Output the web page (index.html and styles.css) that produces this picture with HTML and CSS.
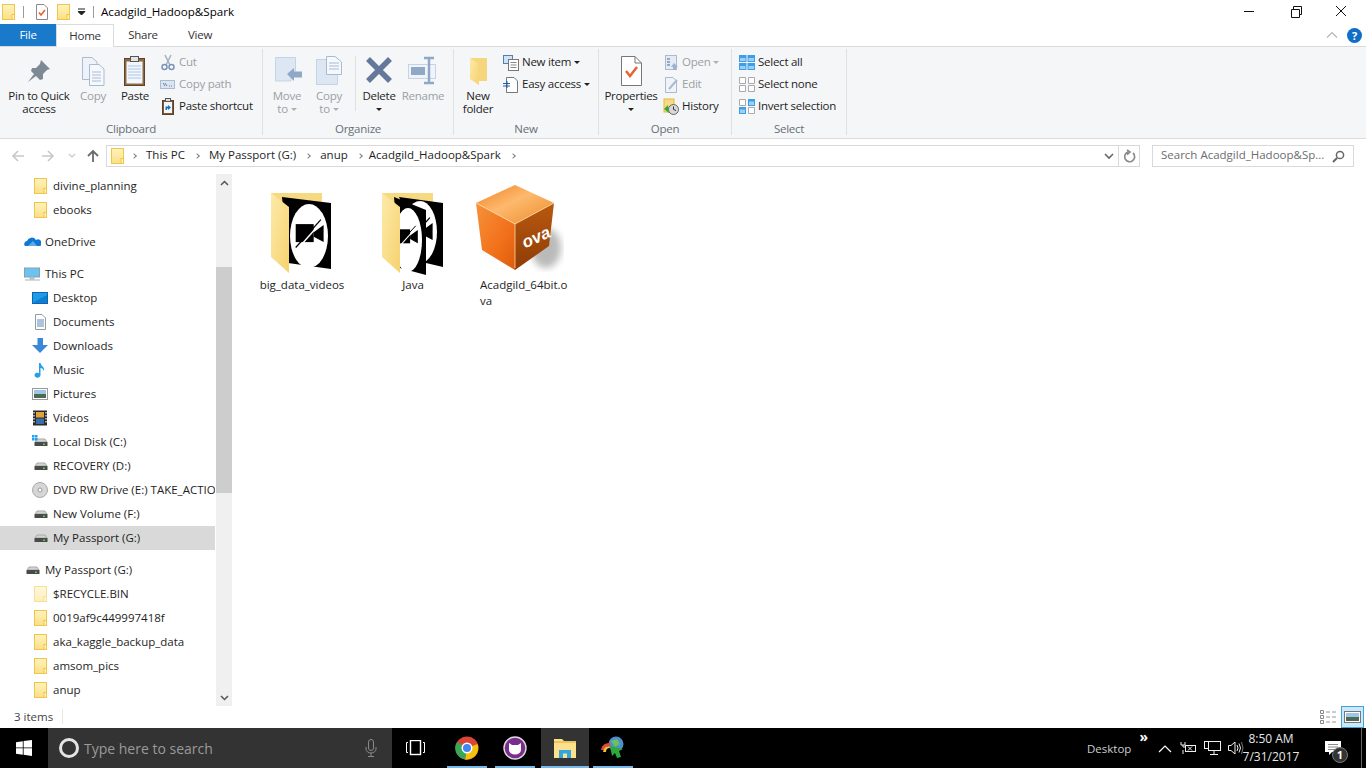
FILE: index.html
```html
<!doctype html>
<html lang="en">
  <head>
    <meta charset="UTF-8" />
    <title>Acadgild_Hadoop&amp;Spark</title>
    <link rel="stylesheet" href="styles.css">
  </head>
  <body>
    <!-- shared icons -->
    <svg class="defs" aria-hidden="true">
      <defs>
        <linearGradient id="fold" x1="0" y1="0" x2="0" y2="1">
          <stop offset="0" stop-color="#fff3bd" />
          <stop offset="1" stop-color="#fbdf85" />
        </linearGradient>
        <linearGradient id="flap" x1="0" y1="0" x2="1" y2="1">
          <stop offset="0" stop-color="#fdeaa8" />
          <stop offset="1" stop-color="#f6d270" />
        </linearGradient>
        <linearGradient id="ova-top" x1="0" y1="0" x2="1" y2="1">
          <stop offset="0" stop-color="#f08020" />
          <stop offset="0.45" stop-color="#fdb96e" />
          <stop offset="1" stop-color="#ec8a28" />
        </linearGradient>
        <linearGradient id="ova-left" x1="0" y1="0" x2="1" y2="1">
          <stop offset="0" stop-color="#f6923a" />
          <stop offset="0.6" stop-color="#f2711a" />
          <stop offset="1" stop-color="#dc5c0c" />
        </linearGradient>
        <linearGradient id="ova-right" x1="0" y1="0" x2="0" y2="1">
          <stop offset="0" stop-color="#b9590f" />
          <stop offset="1" stop-color="#8e3c07" />
        </linearGradient>
        <filter id="soft"><feGaussianBlur stdDeviation="3.5" /></filter>
        <symbol id="folder" viewBox="0 0 17 18">
          <rect x="2.5" y="1.5" width="12" height="15" fill="url(#fold)" stroke="#f0c64a" />
          <rect x="12" y="11.5" width="2.5" height="5" fill="#fff3bd" stroke="#f0c64a" />
        </symbol>
        <symbol id="drive" viewBox="0 0 17 18">
          <path d="M3 9 L5 6 H13 L15 9 Z" fill="#d4d4d4" stroke="#a8a8a8" />
          <rect x="2.5" y="9" width="13" height="4" fill="#4a4a4a" />
          <rect x="11" y="10.5" width="2" height="1.5" fill="#4fd04f" />
        </symbol>
        <symbol id="camera" viewBox="0 0 40 40">
          <rect x="3" y="9" width="20" height="20" fill="#000" />
          <path d="M23 18 L34 10 V29 L23 23 Z" fill="#000" />
          <path d="M3 35 L31 4" stroke="#000" stroke-width="1.4" />
          <path d="M5.5 36 L33 5" stroke="#fff" stroke-width="1.6" />
        </symbol>
      </defs>
    </svg>

    <div class="window">
      <div class="titlebar">
        <svg class="qa-folder" width="17" height="18"><use href="#folder" /></svg>
        <i class="qa-sep"></i>
        <svg class="qa-check" width="14" height="18" viewBox="0 0 14 18">
          <path d="M1.5 1.5 H9 L12.5 5 V16.5 H1.5 Z" fill="#fff" stroke="#8a8a8a" />
          <path d="M4 9.5 L6 12 L10 7" fill="none" stroke="#e8622a" stroke-width="1.6" />
        </svg>
        <svg class="qa-folder2" width="17" height="18"><use href="#folder" /></svg>
        <svg class="qa-more" width="8" height="8" viewBox="0 0 8 8">
          <path d="M0 1 H7 M0 3.5 H7 L3.5 7 Z" stroke="#222" fill="#222" />
        </svg>
        <i class="qa-sep qa-sep-2"></i>
        <span class="title-text">Acadgild_Hadoop&amp;Spark</span>
        <div class="win-controls">
          <svg width="46" height="22" viewBox="0 0 46 22"><path d="M18 10.5 H28" stroke="#111" /></svg>
          <svg width="46" height="22" viewBox="0 0 46 22">
            <path d="M19.5 8.5 H27.5 V16.5 H19.5 Z M21.5 8 V5.5 H29.5 V13.5 H28" fill="none" stroke="#111" />
          </svg>
          <svg width="46" height="22" viewBox="0 0 46 22"><path d="M18 5 L28 15 M28 5 L18 15" stroke="#111" /></svg>
        </div>
      </div>

      <div class="tabs">
        <div class="tab tab-file">File</div>
        <div class="tab tab-home">Home</div>
        <div class="tab tab-share">Share</div>
        <div class="tab tab-view">View</div>
        <div class="tabs-right">
          <svg width="12" height="8" viewBox="0 0 12 8"><path d="M1 6.5 L6 1.5 L11 6.5" fill="none" stroke="#b5b5b5" stroke-width="1.2" /></svg>
          <span class="help">?</span>
        </div>
      </div>

      <div class="ribbon">
        <section class="group group-clipboard">
          <div class="group-body">
            <div class="big btn-pin">
              <svg width="30" height="32" viewBox="0 0 30 30">
                <path d="M17 4 L26 13 L23 14 L19 18 L19 23 L16 24 L7 15 L8 12 L12 12 L16 8 Z M10 18 L4 26 L12 20 Z" fill="#7d8994" />
              </svg>
              <span>Pin to Quick<br>access</span>
            </div>
            <div class="big off btn-copy">
              <svg width="30" height="32" viewBox="0 0 30 32">
                <path d="M4.5 2.5 H14 L19 7 V24.5 H4.5 Z" fill="#eef3fa" stroke="#a9bad2" />
                <path d="M11.5 9.5 H21 L26 14 V30.5 H11.5 Z" fill="#f5f8fc" stroke="#a9bad2" />
                <path d="M14 17 H23 M14 20 H23 M14 23 H23 M14 26 H23" stroke="#a9bad2" />
              </svg>
              <span>Copy</span>
            </div>
            <div class="big btn-paste">
              <svg width="26" height="32" viewBox="0 0 26 32">
                <rect x="2.5" y="3.5" width="20" height="27" fill="#8a6a45" stroke="#5d4226" />
                <rect x="4.5" y="6.5" width="16" height="22" fill="#f3f7fc" />
                <path d="M6 11 H19 M6 14 H19 M6 17 H19 M6 20 H19 M6 23 H19" stroke="#a9c8e8" />
                <rect x="8.5" y="1.5" width="8" height="5" fill="#e5e5e5" stroke="#555" />
              </svg>
              <span>Paste</span>
            </div>
            <div class="small-col col-clipboard">
              <div class="small off">
                <svg width="16" height="17" viewBox="0 0 16 17">
                  <path d="M5 1 L10 11 M11 1 L6 11" stroke="#a6b0bb" stroke-width="1.5" />
                  <circle cx="4.5" cy="13" r="2.5" fill="none" stroke="#7d93b5" stroke-width="1.5" />
                  <circle cx="11.5" cy="13" r="2.5" fill="none" stroke="#7d93b5" stroke-width="1.5" />
                </svg>
                <span>Cut</span>
              </div>
              <div class="small off">
                <svg width="16" height="17" viewBox="0 0 16 17">
                  <rect x="0.5" y="4.5" width="14" height="8" fill="#dbe5f2" stroke="#a9bad2" />
                  <path d="M3 7 L5 10 M5 7 L7 10 M9 10 H10 M11 10 H12" stroke="#6f86a8" />
                </svg>
                <span>Copy path</span>
              </div>
              <div class="small">
                <svg width="16" height="17" viewBox="0 0 16 17">
                  <rect x="2.5" y="2.5" width="11" height="14" fill="#7a5a38" stroke="#5d4226" />
                  <rect x="4" y="4" width="8" height="11" fill="#f3f7fc" />
                  <rect x="5.5" y="0.5" width="5" height="3" fill="#ddd" stroke="#555" />
                  <path d="M5.5 12 V8.5 H8 V7 L11 9.5 L8 12 V10.5 H7 V12 Z" fill="#1a6fc0" />
                </svg>
                <span>Paste shortcut</span>
              </div>
            </div>
          </div>
          <div class="group-label">Clipboard</div>
        </section>

        <section class="group group-organize">
          <div class="group-body">
            <div class="big off btn-move">
              <svg width="30" height="32" viewBox="0 0 30 32">
                <path d="M3.5 2.5 H23.5 V16 H19 V26 H3.5 Z" fill="#dde7f3" stroke="#c5d3e6" />
                <path d="M15 19 L22 13 V16.5 H30 V22.5 H22 V26 Z" fill="#8fa8c8" />
              </svg>
              <span>Move<br>to <b class="caret off-caret"></b></span>
            </div>
            <div class="big off btn-copyto">
              <svg width="30" height="32" viewBox="0 0 30 32">
                <path d="M2.5 4.5 H23.5 V29.5 H2.5 Z" fill="#dde7f3" stroke="#c5d3e6" />
                <path d="M12.5 1.5 H21 L27.5 7 V19.5 H12.5 Z" fill="#f5f8fc" stroke="#a9bad2" />
                <path d="M15 8 H25 M15 11 H25 M15 14 H25" stroke="#a9bad2" />
              </svg>
              <span>Copy<br>to <b class="caret off-caret"></b></span>
            </div>
            <i class="ribbon-sep"></i>
            <div class="big btn-delete">
              <svg width="30" height="32" viewBox="0 0 30 32">
                <path d="M4 4 L26 26 M26 4 L4 26" stroke="#64789c" stroke-width="5.5" />
              </svg>
              <span>Delete<br><b class="caret"></b></span>
            </div>
            <div class="big off btn-rename">
              <svg width="32" height="32" viewBox="0 0 32 32">
                <rect x="1.5" y="9.5" width="27" height="14" fill="#f0f4f9" stroke="#c5d3e6" />
                <rect x="4" y="12" width="14" height="8" fill="#8fa8c8" />
                <path d="M17 3 H27 M22 3 V28 M17 28 H27" stroke="#8fa8c8" stroke-width="2.5" fill="none" />
              </svg>
              <span>Rename</span>
            </div>
          </div>
          <div class="group-label">Organize</div>
        </section>

        <section class="group group-new">
          <div class="group-body">
            <div class="big btn-newfolder">
              <svg width="26" height="32" viewBox="0 0 26 32">
                <path d="M5 3 H22 V26 H10 Z" fill="#f5d67c" />
                <path d="M5 3 L13 8 L14 30 L5 24 Z" fill="url(#flap)" />
              </svg>
              <span>New<br>folder</span>
            </div>
            <div class="small-col col-new">
              <div class="small">
                <svg width="16" height="17" viewBox="0 0 16 17">
                  <rect x="0.5" y="1.5" width="9" height="8" fill="#cfe3f7" stroke="#5a7fa6" />
                  <rect x="5.5" y="5.5" width="10" height="11" fill="#fff" stroke="#777" />
                  <path d="M7.5 8.5 H13.5 M7.5 11 H13.5 M7.5 13.5 H13.5" stroke="#888" />
                </svg>
                <span>New item <b class="caret"></b></span>
              </div>
              <div class="small">
                <svg width="16" height="17" viewBox="0 0 16 17">
                  <path d="M3.5 1.5 H11 L14.5 5 V16.5 H3.5 Z" fill="#fff" stroke="#777" />
                  <path d="M0 7.5 H7 M0 10 H7 M4 5 V12" stroke="#1f5fa8" />
                </svg>
                <span>Easy access <b class="caret"></b></span>
              </div>
            </div>
          </div>
          <div class="group-label">New</div>
        </section>

        <section class="group group-open">
          <div class="group-body">
            <div class="big btn-props">
              <svg width="26" height="32" viewBox="0 0 26 32">
                <path d="M3.5 1.5 H17 L23.5 8 V30.5 H3.5 Z" fill="#fff" stroke="#777" />
                <path d="M17 1.5 V8 H23.5" fill="none" stroke="#777" />
                <path d="M8 16 L12 21 L19 12" fill="none" stroke="#e8622a" stroke-width="2.4" />
              </svg>
              <span>Properties<br><b class="caret"></b></span>
            </div>
            <div class="small-col col-open">
              <div class="small off">
                <svg width="16" height="17" viewBox="0 0 16 17">
                  <rect x="2.5" y="1.5" width="11" height="14" fill="#e4ebf4" stroke="#a9bad2" />
                  <path d="M4 5 H7 M4 8 H7 M4 11 H7" stroke="#7d93b5" stroke-width="1.5" />
                  <path d="M8 13 L11 9 L15 13 H13 V16 H10 V13 Z" fill="#9fb3cc" />
                </svg>
                <span>Open <b class="caret off-caret"></b></span>
              </div>
              <div class="small off">
                <svg width="16" height="17" viewBox="0 0 16 17">
                  <path d="M2.5 1.5 H10 L13.5 5 V16.5 H2.5 Z" fill="#f0f4f9" stroke="#a9bad2" />
                  <path d="M6 13 L14 4" stroke="#a9bad2" stroke-width="2" />
                </svg>
                <span>Edit</span>
              </div>
              <div class="small">
                <svg width="16" height="17" viewBox="0 0 16 17">
                  <rect x="1" y="1" width="10" height="13" fill="#f8dc85" stroke="#e0b93f" />
                  <circle cx="10.5" cy="11.5" r="5" fill="#d8d8d8" stroke="#666" />
                  <path d="M10.5 8.5 V11.5 L13 12.5" fill="none" stroke="#333" />
                  <path d="M1 11 L5 7 L6 15 Z" fill="#3aa53a" />
                </svg>
                <span>History</span>
              </div>
            </div>
          </div>
          <div class="group-label">Open</div>
        </section>

        <section class="group group-select">
          <div class="group-body">
            <div class="small-col">
              <div class="small">
                <svg width="16" height="17" viewBox="0 0 16 17">
                  <path d="M0 1 H7.5 V8 H0 Z M8.5 1 H16 V8 H8.5 Z M0 9 H7.5 V16 H0 Z M8.5 9 H16 V16 H8.5 Z" fill="#3f9ee8" />
                  <path d="M1 4 H6.5 V7 H1 Z M9.5 4 H15 V7 H9.5 Z M1 12 H6.5 V15 H1 Z M9.5 12 H15 V15 H9.5 Z" fill="#9ccff5" />
                </svg>
                <span>Select all</span>
              </div>
              <div class="small">
                <svg width="16" height="17" viewBox="0 0 16 17">
                  <path d="M.5 1.5 H6.5 V7.5 H.5 Z M9.5 1.5 H15.5 V7.5 H9.5 Z M.5 9.5 H6.5 V15.5 H.5 Z M9.5 9.5 H15.5 V15.5 H9.5 Z" fill="#fff" stroke="#aaa" />
                </svg>
                <span>Select none</span>
              </div>
              <div class="small">
                <svg width="16" height="17" viewBox="0 0 16 17">
                  <path d="M.5 1.5 H6.5 V7.5 H.5 Z M9.5 9.5 H15.5 V15.5 H9.5 Z" fill="#fff" stroke="#aaa" />
                  <path d="M9 1 H16 V8 H9 Z M0 9 H7 V16 H0 Z" fill="#3f9ee8" />
                  <path d="M10 3.5 H15 V7 H10 Z M1 11.5 H6 V15 H1 Z" fill="#9ccff5" />
                </svg>
                <span>Invert selection</span>
              </div>
            </div>
          </div>
          <div class="group-label">Select</div>
        </section>
      </div>

      <div class="address-row">
        <div class="nav-btns">
          <svg width="16" height="14" viewBox="0 0 16 14"><path d="M14 7 H3 M8 2 L3 7 L8 12" fill="none" stroke="#c8c8c8" stroke-width="1.6" /></svg>
          <svg width="16" height="14" viewBox="0 0 16 14"><path d="M2 7 H13 M8 2 L13 7 L8 12" fill="none" stroke="#c8c8c8" stroke-width="1.6" /></svg>
          <svg width="8" height="6" viewBox="0 0 8 6"><path d="M1 1 L4 4 L7 1" fill="none" stroke="#c8c8c8" stroke-width="1.2" /></svg>
          <svg width="16" height="14" viewBox="0 0 16 14"><path d="M8 13 V2 M3 7 L8 2 L13 7" fill="none" stroke="#6a6a6a" stroke-width="1.8" /></svg>
        </div>
        <div class="crumbs">
          <svg class="crumb-folder" width="17" height="18"><use href="#folder" /></svg>
          <span class="chev"></span><span class="crumb crumb-pc">This PC</span>
          <span class="chev"></span><span class="crumb crumb-drive">My Passport (G:)</span>
          <span class="chev"></span><span class="crumb crumb-anup">anup</span>
          <span class="chev"></span><span class="crumb crumb-last">Acadgild_Hadoop&amp;Spark</span>
          <span class="chev"></span>
          <svg class="crumb-down" width="10" height="7" viewBox="0 0 10 7"><path d="M1 1 L5 5 L9 1" fill="none" stroke="#666" stroke-width="1.6" /></svg>
          <span class="crumb-refresh">
            <svg width="13" height="14" viewBox="0 0 13 14">
              <path d="M10 4 A5 5 0 1 1 5 3 M4 1 L7 3 L4 5.5" fill="none" stroke="#8a8a8a" stroke-width="1.7" />
            </svg>
          </span>
        </div>
        <div class="search-box">
          <span>Search Acadgild_Hadoop&amp;Sp...</span>
          <svg width="13" height="13" viewBox="0 0 13 13">
            <circle cx="8" cy="5" r="3.6" fill="none" stroke="#666" stroke-width="1.5" />
            <path d="M5 8 L1 12" stroke="#666" stroke-width="2" />
          </svg>
        </div>
      </div>

      <div class="main">
        <nav class="tree">
          <div class="row lvl2"><svg width="17" height="18"><use href="#folder" /></svg><span>divine_planning</span></div>
          <div class="row lvl2"><svg width="17" height="18"><use href="#folder" /></svg><span>ebooks</span></div>
          <div class="row lvl1 head">
            <svg width="17" height="18" viewBox="0 0 17 18">
              <path d="M1 13 A3 3 0 0 1 3 8 A5 5 0 0 1 12 7 A3.5 3.5 0 0 1 16 13 Z" fill="#0f78d4" />
              <path d="M4 13 L9 8 L13 13 Z" fill="#fff" opacity="0.35" />
            </svg>
            <span>OneDrive</span>
          </div>
          <div class="row lvl1 head">
            <svg width="17" height="18" viewBox="0 0 17 18">
              <rect x="0.5" y="3" width="15" height="9" fill="#6cc3f2" stroke="#8aa0b0" />
              <path d="M6 12 H10 V14 H6 Z M1 15 H16" stroke="#a4b2bd" fill="#cfd8de" />
            </svg>
            <span>This PC</span>
          </div>
          <div class="row lvl2">
            <svg width="17" height="18" viewBox="0 0 17 18">
              <rect x="0.5" y="3.5" width="15" height="11" fill="#1d9ae8" stroke="#0d66ad" />
              <path d="M2 13 L15 6 V14 H2 Z" fill="#0e7fd0" />
            </svg>
            <span>Desktop</span>
          </div>
          <div class="row lvl2">
            <svg width="17" height="18" viewBox="0 0 17 18">
              <path d="M3.5 1.5 H10 L13.5 5 V16.5 H3.5 Z" fill="#fff" stroke="#9a9a9a" />
              <path d="M5 7 H12 M5 9 H12 M5 11 H12 M5 13 H12" stroke="#5b8ab8" />
            </svg>
            <span>Documents</span>
          </div>
          <div class="row lvl2">
            <svg width="17" height="18" viewBox="0 0 17 18">
              <path d="M5.5 1 H11 V8 H16 L8 16 L0 8 H5.5 Z" fill="#3b87d8" />
            </svg>
            <span>Downloads</span>
          </div>
          <div class="row lvl2">
            <svg width="17" height="18" viewBox="0 0 17 18">
              <path d="M7 2 L8.5 2 C9 5 13 6 12 10 C11 8 10 7 8.5 7 V14 A3 2.5 0 1 1 7 12 Z" fill="#27a0e8" />
            </svg>
            <span>Music</span>
          </div>
          <div class="row lvl2">
            <svg width="17" height="18" viewBox="0 0 17 18">
              <rect x="0.5" y="3.5" width="15" height="11" fill="#fff" stroke="#9a9a9a" />
              <rect x="2" y="5" width="12" height="4" fill="#9fc6e8" />
              <rect x="2" y="9" width="12" height="4" fill="#4d6b52" />
            </svg>
            <span>Pictures</span>
          </div>
          <div class="row lvl2">
            <svg width="17" height="18" viewBox="0 0 17 18">
              <rect x="1" y="1.5" width="14" height="15" fill="#2a2a2a" />
              <rect x="4" y="3" width="8" height="5.5" fill="#e0a33a" />
              <rect x="4" y="9.5" width="8" height="5.5" fill="#3a6ea8" />
              <path d="M2 3 V15 M14 3 V15" stroke="#ddd" stroke-width="1.4" stroke-dasharray="1.5 1.5" />
            </svg>
            <span>Videos</span>
          </div>
          <div class="row lvl2">
            <svg width="17" height="18" viewBox="0 0 17 18">
              <use href="#drive" />
              <path d="M0 2 H2.5 V4.5 H0 Z M3 2 H5.5 V4.5 H3 Z M0 5 H2.5 V7.5 H0 Z M3 5 H5.5 V7.5 H3 Z" fill="#1fa0f0" />
            </svg>
            <span>Local Disk (C:)</span>
          </div>
          <div class="row lvl2"><svg width="17" height="18"><use href="#drive" /></svg><span>RECOVERY (D:)</span></div>
          <div class="row lvl2">
            <svg width="17" height="18" viewBox="0 0 17 18">
              <circle cx="8" cy="9" r="7.5" fill="#d6d6d6" stroke="#aaa" />
              <circle cx="8" cy="9" r="2" fill="#fff" stroke="#999" />
            </svg>
            <span>DVD RW Drive (E:) TAKE_ACTION</span>
          </div>
          <div class="row lvl2"><svg width="17" height="18"><use href="#drive" /></svg><span>New Volume (F:)</span></div>
          <div class="row lvl2 selected"><svg width="17" height="18"><use href="#drive" /></svg><span>My Passport (G:)</span></div>
          <div class="row lvl1 head"><svg width="17" height="18"><use href="#drive" /></svg><span>My Passport (G:)</span></div>
          <div class="row lvl2"><svg class="faded" width="17" height="18"><use href="#folder" /></svg><span>$RECYCLE.BIN</span></div>
          <div class="row lvl2"><svg width="17" height="18"><use href="#folder" /></svg><span>0019af9c449997418f</span></div>
          <div class="row lvl2"><svg width="17" height="18"><use href="#folder" /></svg><span>aka_kaggle_backup_data</span></div>
          <div class="row lvl2"><svg width="17" height="18"><use href="#folder" /></svg><span>amsom_pics</span></div>
          <div class="row lvl2"><svg width="17" height="18"><use href="#folder" /></svg><span>anup</span></div>
        </nav>

        <div class="scrollbar">
          <div class="sb-btn">
            <svg width="9" height="6" viewBox="0 0 9 6"><path d="M1 5 L4.5 1.5 L8 5" fill="none" stroke="#555" stroke-width="1.5" /></svg>
          </div>
          <div class="sb-track"><div class="sb-thumb"></div></div>
          <div class="sb-btn">
            <svg width="9" height="6" viewBox="0 0 9 6"><path d="M1 1 L4.5 4.5 L8 1" fill="none" stroke="#555" stroke-width="1.5" /></svg>
          </div>
        </div>

        <div class="files">
          <div class="file">
            <svg width="75" height="92" viewBox="0 0 75 92">
              <path d="M6 8 H57 V30 H6 Z" fill="#f7d981" />
              <path d="M17 12 L66 18 V84 L23 78 Z" fill="#000" />
              <ellipse cx="44" cy="51" rx="19" ry="32" fill="#fff" />
              <use href="#camera" x="28" y="31" width="36" height="36" />
              <path d="M6 8 L24 22 V88 L6 72 Z" fill="url(#flap)" />
            </svg>
            <div class="file-name">big_data_videos</div>
          </div>
          <div class="file">
            <svg width="75" height="92" viewBox="0 0 75 92">
              <path d="M6 8 H57 V30 H6 Z" fill="#f7d981" />
              <path d="M23 12 L67 18 V82 L50 78 Z" fill="#000" />
              <ellipse cx="44" cy="47" rx="17" ry="31" fill="#fff" />
              <use href="#camera" x="26" y="29" width="36" height="36" />
              <path d="M18 12 L50 25 V90 L24 83 Z" fill="#000" />
              <ellipse cx="32" cy="55" rx="14" ry="32" fill="#fff" />
              <use href="#camera" x="18" y="38" width="28" height="28" />
              <path d="M6 8 L24 22 V88 L6 72 Z" fill="url(#flap)" />
            </svg>
            <div class="file-name">Java</div>
          </div>
          <div class="file file-ova">
            <svg width="100" height="97" viewBox="0 0 100 97">
              <ellipse cx="76" cy="68" rx="15" ry="20" fill="#555" opacity="0.4" filter="url(#soft)" />
              <path d="M45 5 L84 23 L45 44 L6 23 Z" fill="url(#ova-top)" />
              <path d="M6 23 L45 44 V90 L12 70 Z" fill="url(#ova-left)" />
              <path d="M84 23 L45 44 V90 L79 66 Z" fill="url(#ova-right)" />
              <path d="M6 23 L45 44 L84 23 M45 44 V88" fill="none" stroke="#ffd9a8" stroke-width="0.8" />
              <text class="ova-text" x="66" y="63" transform="rotate(-24 66 57)">ova</text>
            </svg>
            <div class="file-name">Acadgild_64bit.ova</div>
          </div>
        </div>
      </div>

      <div class="statusbar">
        <span class="status-count">3 items</span>
        <div class="view-btns">
          <span class="view-btn">
            <svg width="17" height="14" viewBox="0 0 17 14">
              <path d="M.5 .5 H3.5 V3.5 H.5 Z M.5 5.5 H3.5 V8.5 H.5 Z M.5 10.5 H3.5 V13.5 H.5 Z" fill="#fff" stroke="#888" />
              <path d="M6 2 H10 M12 2 H16 M6 7 H10 M12 7 H16 M6 12 H10 M12 12 H16" stroke="#999" />
            </svg>
          </span>
          <span class="view-btn view-on">
            <svg width="17" height="14" viewBox="0 0 17 14">
              <rect x="0.5" y="1.5" width="16" height="11" fill="#fff" stroke="#777" />
              <rect x="2" y="3" width="13" height="4" fill="#9fc6e8" />
              <rect x="2" y="7" width="13" height="4" fill="#4d6b52" />
            </svg>
          </span>
        </div>
      </div>
    </div>

    <div class="taskbar">
      <div class="start">
        <svg width="16" height="16" viewBox="0 0 16 16">
          <path d="M0 2.2 L6.8 1.2 V7.5 H0 Z M7.6 1.1 L16 0 V7.5 H7.6 Z M0 8.3 H6.8 V14.7 L0 13.8 Z M7.6 8.3 H16 V16 L7.6 14.8 Z" fill="#fff" />
        </svg>
      </div>
      <div class="task-search">
        <i class="cortana"></i>
        <span class="task-search-text">Type here to search</span>
        <svg width="12" height="18" viewBox="0 0 12 18">
          <rect x="3.5" y="0.5" width="5" height="11" rx="2.5" fill="none" stroke="#8a8a8a" />
          <path d="M1 8 V10 A5 4 0 0 0 11 10 V8 M6 14 V17 M3 17.5 H9" fill="none" stroke="#8a8a8a" />
        </svg>
      </div>
      <div class="task-view">
        <svg width="20" height="16" viewBox="0 0 20 16">
          <rect x="4.5" y="0.5" width="10" height="14" fill="none" stroke="#fff" stroke-width="1.4" />
          <path d="M2 2.5 H.5 V12.5 H2 M17 2.5 H18.5 V12.5 H17" fill="none" stroke="#fff" />
        </svg>
      </div>
      <div class="task-app running">
        <svg width="24" height="24" viewBox="0 0 24 24">
          <circle cx="12" cy="12" r="11.5" fill="#db4437" />
          <path d="M12 12 L22.5 8 A11.5 11.5 0 0 1 10 23.5 Z" fill="#f4c20d" />
          <path d="M12 12 L10 23.5 A11.5 11.5 0 0 1 2 6 Z" fill="#3aa757" />
          <circle cx="12" cy="12" r="5.5" fill="#fff" />
          <circle cx="12" cy="12" r="4" fill="#4285f4" />
        </svg>
      </div>
      <div class="task-app running">
        <svg width="24" height="24" viewBox="0 0 24 24">
          <circle cx="12" cy="12" r="11" fill="#7b2d8e" stroke="#ddd" stroke-width="1.4" />
          <path d="M6 7 L9 9 H15 L18 7 V14 A6 4.5 0 0 1 6 14 Z" fill="#fff" />
        </svg>
      </div>
      <div class="task-app running active">
        <svg width="24" height="22" viewBox="0 0 24 22">
          <path d="M1 2 H9 L11 4 H23 V21 H1 Z" fill="#fde08c" />
          <path d="M1 5 H23" stroke="#d9a93a" />
          <path d="M6 21 V13 H18 V21 H14 V16.5 H10 V21 Z" fill="#2fa6e0" />
        </svg>
      </div>
      <div class="task-app running">
        <svg width="26" height="24" viewBox="0 0 26 24">
          <circle cx="16" cy="8" r="7.5" fill="#4c8fd0" />
          <path d="M11 5 L17 3 L20 8 L15 11 Z" fill="#6fbf5a" />
          <path d="M1 14 A8 8 0 0 1 10 7 L11 10 A5 5 0 0 0 5 14 Z" fill="#e04a3a" />
          <path d="M3 16 A7 7 0 0 1 9 10 L10 12 A4 4 0 0 0 6 16 Z" fill="#f0c030" />
          <path d="M10 10 L23 13 L19 15 L21 21 L17 22 L15 17 L12 20 Z" fill="#2fa83a" />
        </svg>
      </div>
      <div class="tray">
        <span class="tray-desktop">Desktop</span>
        <span class="tray-more">»</span>
        <svg class="tray-up" width="14" height="9" viewBox="0 0 14 9"><path d="M1 8 L7 2 L13 8" fill="none" stroke="#fff" stroke-width="1.2" /></svg>
        <svg class="tray-power" width="17" height="14" viewBox="0 0 17 14">
          <path d="M1 1 V4 H5 V1 M3 4 V6 H5 M3 9 V13" fill="none" stroke="#eee" />
          <rect x="5.5" y="4.5" width="10" height="6" fill="none" stroke="#eee" />
          <path d="M8 5.5 L12 9.5 M12 5.5 L8 9.5" stroke="#eee" />
        </svg>
        <svg class="tray-net" width="17" height="14" viewBox="0 0 17 14">
          <rect x="4.5" y="0.5" width="12" height="9" fill="none" stroke="#eee" />
          <rect x="0.5" y="0.5" width="4" height="7" fill="#000" stroke="#eee" />
          <path d="M10 10 V13 M6 13.5 H14" stroke="#eee" />
        </svg>
        <svg class="tray-vol" width="16" height="14" viewBox="0 0 16 14">
          <path d="M.5 4.5 H3 L7 1 V13 L3 9.5 H.5 Z" fill="none" stroke="#eee" />
          <path d="M9 4 Q11 7 9 10 M11 2.5 Q14 7 11 11.5" fill="none" stroke="#eee" />
          <path d="M13.5 1 Q16.5 7 13.5 13" fill="none" stroke="#777" />
        </svg>
        <div class="clock">
          <div>8:50 AM</div>
          <div>7/31/2017</div>
        </div>
        <div class="notif">
          <svg width="17" height="15" viewBox="0 0 17 15">
            <path d="M0 0 H16 V11 H7 L4 14 V11 H0 Z" fill="#fff" />
            <path d="M3 3.5 H13 M3 6 H13 M3 8.5 H10" stroke="#888" />
          </svg>
          <span class="notif-badge">1</span>
        </div>
        <i class="show-desktop"></i>
      </div>
    </div>
  </body>
</html>
```

FILE: styles.css
```css
* {
  box-sizing: border-box;
}

body {
  margin: 0;
  width: 1366px;
  height: 768px;
  overflow: hidden;
  background: #fff;
  font-family: "Open Sans", "Noto Sans", sans-serif;
  font-size: 11.5px;
  color: #1e1e1e;
}

svg {
  display: block;
  flex: none;
}

.defs {
  width: 0;
  height: 0;
  position: absolute;
}

.window {
  height: 728px;
  display: flex;
  flex-direction: column;
}

/* title bar */
.titlebar {
  height: 24px;
  display: flex;
  align-items: center;
}

.qa-sep {
  width: 1px;
  height: 12px;
  background: #9a9a9a;
  margin-left: 6px;
}

.qa-check {
  margin-left: 11px;
}

.qa-folder2 {
  margin-left: 6px;
}

.qa-more {
  margin-left: 6px;
}

.qa-sep-2 {
  margin-left: 7px;
}

.title-text {
  margin: 0 0 1px 7px;
  font-size: 11.6px;
  color: #000;
}

.win-controls {
  margin-left: auto;
  margin-right: 2px;
  display: flex;
}

/* tabs */
.tabs {
  height: 23px;
  display: flex;
  border-bottom: 1px solid #dadbdc;
  letter-spacing: -0.25px;
}

.tab {
  height: 23px;
  line-height: 22px;
  text-align: center;
  color: #333;
}

.tab-file {
  width: 56px;
  height: 22px;
  background: #1979ca;
  color: #fff;
}

.tab-home {
  width: 58px;
  background: #fff;
  border: 1px solid #dadbdc;
  border-bottom: 0;
}

.tab-share {
  width: 58px;
}

.tab-view {
  width: 56px;
}

.tabs-right {
  margin-left: auto;
  margin-right: 4px;
  display: flex;
  align-items: center;
  gap: 9px;
}

.help {
  width: 15px;
  height: 15px;
  border-radius: 50%;
  background: #0f6fc6;
  color: #fff;
  font-weight: 700;
  font-size: 11px;
  line-height: 15px;
  text-align: center;
}

/* ribbon */
.ribbon {
  height: 92px;
  display: flex;
  background: #f5f6f7;
  border-bottom: 1px solid #dadbdc;
  padding-top: 2px;
  letter-spacing: -0.25px;
}

.group {
  height: 86px;
  display: flex;
  flex-direction: column;
  border-right: 1px solid #dfe0e1;
}

.group-clipboard {
  width: 263px;
}

.group-organize {
  width: 191px;
}

.group-new {
  width: 145px;
}

.group-open {
  width: 133px;
}

.group-select {
  width: 115px;
}

.group-body {
  height: 72px;
  display: flex;
}

.group-label {
  height: 14px;
  line-height: 16px;
  text-align: center;
  color: #667078;
}

.group-organize .group-body {
  padding-left: 9px;
}

.group-new .group-body {
  padding-left: 4px;
}

.group-open .group-body {
  padding-left: 2px;
}

.group-select .group-body {
  padding-left: 7px;
}

.big {
  display: flex;
  flex-direction: column;
  align-items: center;
  text-align: center;
  line-height: 13px;
  flex: none;
}

.big svg {
  height: 32px;
  margin-top: 6px;
  margin-bottom: 2px;
}

.off {
  color: #9aa0a6;
}

.caret {
  display: inline-block;
  width: 0;
  height: 0;
  border-left: 3px solid transparent;
  border-right: 3px solid transparent;
  border-top: 3px solid #222;
  vertical-align: 2px;
}

.off-caret {
  border-top-color: #b0b0b0;
}

.btn-pin {
  width: 78px;
}

.btn-copy {
  width: 30px;
}

.btn-paste {
  width: 36px;
  margin-left: 9px;
}

.col-clipboard {
  margin-left: 7px;
}

.btn-move,
.btn-copyto {
  width: 30px;
}

.btn-copyto {
  margin-left: 12px;
}

.ribbon-sep {
  width: 1px;
  height: 55px;
  margin: 7px 3px 0 11px;
  background: #dfe0e1;
}

.btn-delete {
  width: 40px;
}

.btn-rename {
  width: 46px;
  margin-left: 1px;
}

.btn-newfolder {
  width: 40px;
}

.col-new {
  margin-left: 5px;
}

.btn-props {
  width: 60px;
}

.col-open {
  margin-left: 2px;
}

.small-col {
  padding-top: 2px;
  display: flex;
  flex-direction: column;
}

.small {
  height: 22px;
  display: flex;
  align-items: center;
  gap: 3px;
  white-space: nowrap;
}

.small span {
  margin-bottom: 2px;
}

/* address bar */
.address-row {
  height: 35px;
  display: flex;
  align-items: flex-start;
  padding-top: 6px;
}

.nav-btns {
  width: 106px;
  height: 22px;
  display: flex;
  align-items: center;
  padding-left: 10px;
  gap: 14px;
}

.nav-btns svg:nth-child(3) {
  margin: 0 -5px 0 -2px;
}

.crumbs {
  width: 1034px;
  height: 22px;
  border: 1px solid #d9d9d9;
  display: flex;
  align-items: center;
}

.crumb-folder {
  margin: 0 -4px 0 2px;
}

.chev {
  width: 4px;
  height: 4px;
  border-top: 1.5px solid #808080;
  border-right: 1.5px solid #808080;
  transform: rotate(45deg);
  margin-left: 10px;
  flex: none;
}

.crumb {
  margin: 0 0 3px 10px;
  white-space: nowrap;
}

.crumb-last {
  margin-left: 7px;
}

.crumb-down {
  margin-left: auto;
}

.crumb-refresh {
  width: 21px;
  height: 20px;
  margin-left: 4px;
  border-left: 1px solid #d9d9d9;
  display: flex;
  align-items: center;
  justify-content: center;
}

.search-box {
  width: 202px;
  height: 22px;
  margin-left: 12px;
  border: 1px solid #d9d9d9;
  display: flex;
  align-items: center;
  justify-content: space-between;
  padding: 0 8px;
  color: #6d6d6d;
}

.search-box span {
  margin-bottom: 3px;
}

/* nav pane and files */
.main {
  height: 532px;
  display: flex;
}

.tree {
  width: 216px;
  overflow: hidden;
  flex: none;
}

.row {
  width: 215px;
  height: 24px;
  display: flex;
  align-items: center;
  gap: 4px;
  white-space: nowrap;
  overflow: hidden;
}

.row span {
  margin-bottom: 2px;
}

.lvl1 {
  padding-left: 24px;
}

.lvl2 {
  padding-left: 32px;
}

.head {
  margin-top: 8px;
}

.selected {
  background: #d9d9d9;
}

.faded {
  opacity: 0.55;
}

.scrollbar {
  width: 16px;
  display: flex;
  flex-direction: column;
  background: #f0f0f0;
  flex: none;
}

.sb-btn {
  height: 17px;
  display: flex;
  align-items: center;
  justify-content: center;
}

.sb-track {
  flex: 1;
}

.sb-thumb {
  height: 226px;
  margin-top: 76px;
  background: #cdcdcd;
}

.files {
  flex: 1;
  display: flex;
  align-items: flex-start;
  gap: 21px;
  padding: 11px 0 0 25px;
}

.file {
  width: 90px;
  display: flex;
  flex-direction: column;
  align-items: center;
}

.file-name {
  width: 100%;
  line-height: 16px;
  text-align: center;
  word-break: break-all;
}

.file-ova svg {
  align-self: flex-start;
  margin: -5px 0 0 -9px;
}

.file-ova .file-name {
  text-align: left;
  padding-left: 1px;
}

.ova-text {
  font-family: "Liberation Sans", sans-serif;
  font-size: 17px;
  font-weight: 700;
  font-style: italic;
  fill: #fff;
  text-anchor: middle;
}

/* status bar */
.statusbar {
  height: 22px;
  display: flex;
  align-items: center;
  color: #444;
}

.status-count {
  margin: 0 0 2px 14px;
  padding-right: 9px;
  border-right: 1px solid #e8e8e8;
}

.view-btns {
  margin-left: auto;
  margin-right: 2px;
  display: flex;
  gap: 1px;
}

.view-btn {
  width: 23px;
  height: 22px;
  display: flex;
  align-items: center;
  justify-content: center;
}

.view-on {
  background: #cce8ff;
  border: 1px solid #3fa2d9;
}

/* task bar */
.taskbar {
  height: 40px;
  background: #000;
  display: flex;
  align-items: center;
  color: #fff;
}

.start {
  width: 48px;
  display: flex;
  justify-content: center;
}

.task-search {
  width: 344px;
  height: 40px;
  background: #333;
  display: flex;
  align-items: center;
  padding: 0 15px 0 11px;
}

.cortana {
  width: 20px;
  height: 20px;
  border: 3px solid #e4e4e4;
  border-radius: 50%;
  flex: none;
}

.task-search-text {
  flex: 1;
  margin-left: 5px;
  font-size: 14px;
  color: #9a9a9a;
}

.task-view {
  width: 51px;
  padding-right: 3px;
  display: flex;
  justify-content: center;
}

.task-app {
  width: 48px;
  height: 40px;
  display: flex;
  align-items: center;
  justify-content: center;
  position: relative;
}

.running::after {
  content: "";
  position: absolute;
  left: 4px;
  right: 4px;
  bottom: 0;
  height: 2px;
  background: #76b9ed;
}

.active {
  margin-left: 2px;
  background: #333;
}

.active::after {
  left: 0;
  right: 0;
}

.tray {
  margin-left: auto;
  height: 40px;
  display: flex;
  align-items: center;
  font-size: 11.5px;
  color: #ddd;
}

.tray-desktop {
  color: #ccc;
}

.tray-more {
  align-self: flex-start;
  margin: 2px 0 0 8px;
  font-size: 14px;
  line-height: 14px;
  font-weight: 700;
  color: #fff;
}

.tray-up {
  margin-left: 10px;
}

.tray-power {
  margin-left: 8px;
}

.tray-net {
  margin-left: 7px;
}

.tray-vol {
  margin-left: 7px;
}

.clock {
  width: 66px;
  margin-left: -6px;
  text-align: center;
  line-height: 18px;
  font-size: 12px;
  color: #e6e6e6;
}

.notif {
  width: 33px;
  height: 40px;
  margin-left: 13px;
  display: flex;
  align-items: center;
  justify-content: center;
  position: relative;
}

.notif-badge {
  position: absolute;
  right: 2px;
  bottom: 5px;
  width: 16px;
  height: 16px;
  border-radius: 50%;
  background: #333;
  border: 1px solid #777;
  font-size: 11px;
  font-weight: 700;
  line-height: 14px;
  text-align: center;
  color: #fff;
}

.show-desktop {
  width: 1px;
  height: 40px;
  margin-left: 11px;
  margin-right: 4px;
  background: #666;
}
```
